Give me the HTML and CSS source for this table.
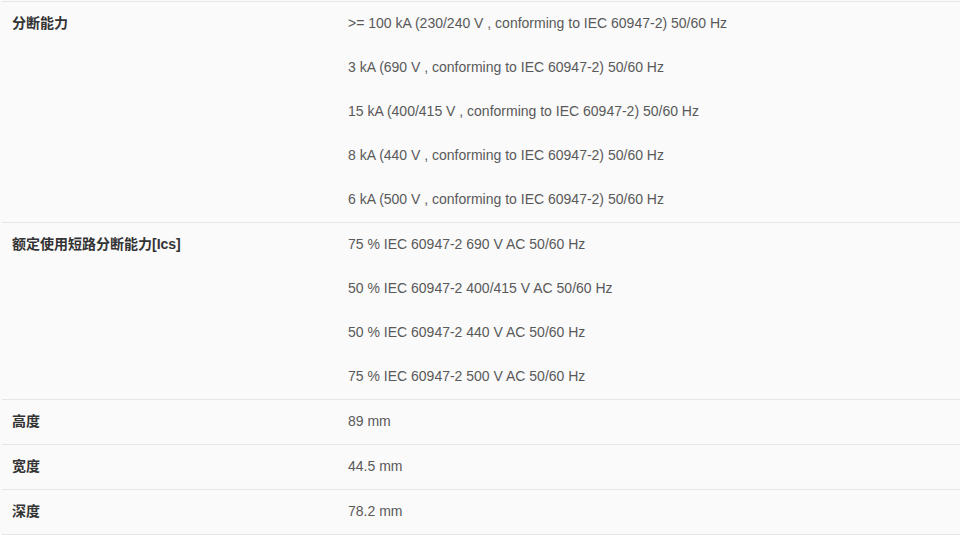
FILE: index.html
```html
<!DOCTYPE html>
<html lang="zh">
<head>
    <meta charset="UTF-8">
    <title>技术参数</title>
    <link rel="stylesheet" href="styles.css">
</head>
<body>
    <div class="spec-table">
        <div class="spec-row">
            <div class="spec-label">分断能力</div>
            <div class="spec-values">
                <p>&gt;= 100 kA (230/240 V , conforming to IEC 60947-2) 50/60 Hz</p>
                <p>3 kA (690 V , conforming to IEC 60947-2) 50/60 Hz</p>
                <p>15 kA (400/415 V , conforming to IEC 60947-2) 50/60 Hz</p>
                <p>8 kA (440 V , conforming to IEC 60947-2) 50/60 Hz</p>
                <p>6 kA (500 V , conforming to IEC 60947-2) 50/60 Hz</p>
            </div>
        </div>
        <div class="spec-row">
            <div class="spec-label">额定使用短路分断能力[Ics]</div>
            <div class="spec-values">
                <p>75 % IEC 60947-2 690 V AC 50/60 Hz</p>
                <p>50 % IEC 60947-2 400/415 V AC 50/60 Hz</p>
                <p>50 % IEC 60947-2 440 V AC 50/60 Hz</p>
                <p>75 % IEC 60947-2 500 V AC 50/60 Hz</p>
            </div>
        </div>
        <div class="spec-row">
            <div class="spec-label">高度</div>
            <div class="spec-values">
                <p>89 mm</p>
            </div>
        </div>
        <div class="spec-row">
            <div class="spec-label">宽度</div>
            <div class="spec-values">
                <p>44.5 mm</p>
            </div>
        </div>
        <div class="spec-row">
            <div class="spec-label">深度</div>
            <div class="spec-values">
                <p>78.2 mm</p>
            </div>
        </div>
    </div>
</body>
</html>
```

FILE: styles.css
```css
* {
    margin: 0;
    padding: 0;
    box-sizing: border-box;
}

body {
    background: #fafafa;
    font-family: 'Liberation Sans', Arial, 'Noto Sans CJK SC', sans-serif;
    font-size: 14px;
    padding: 1px 0 0 2px;
}

.spec-table {
    border-bottom: 1px solid #e6e6e6;
}

.spec-row {
    display: grid;
    grid-template-columns: 346px 1fr;
    border-top: 1px solid #e6e6e6;
    padding: 11px 0 13px;
}

.spec-label {
    padding-left: 10px;
    line-height: 20px;
    font-weight: bold;
    color: #333;
}

.spec-values {
    display: flex;
    flex-direction: column;
    gap: 24px;
    color: #595959;
}

.spec-values p {
    line-height: 20px;
}
```
